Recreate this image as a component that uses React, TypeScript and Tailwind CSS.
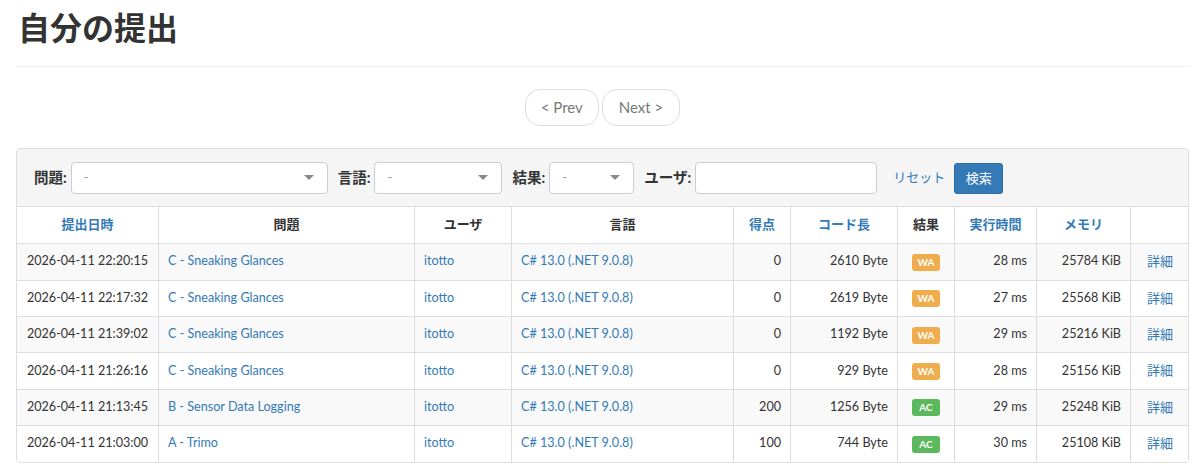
import React from "react";

type Row = {
  date: string;
  problem: string;
  score: string;
  size: string;
  result: "WA" | "AC";
  time: string;
  mem: string;
};

const rows: Row[] = [
  { date: "2026-04-11 22:20:15", problem: "C - Sneaking Glances", score: "0", size: "2610 Byte", result: "WA", time: "28 ms", mem: "25784 KiB" },
  { date: "2026-04-11 22:17:32", problem: "C - Sneaking Glances", score: "0", size: "2619 Byte", result: "WA", time: "27 ms", mem: "25568 KiB" },
  { date: "2026-04-11 21:39:02", problem: "C - Sneaking Glances", score: "0", size: "1192 Byte", result: "WA", time: "29 ms", mem: "25216 KiB" },
  { date: "2026-04-11 21:26:16", problem: "C - Sneaking Glances", score: "0", size: "929 Byte", result: "WA", time: "28 ms", mem: "25156 KiB" },
  { date: "2026-04-11 21:13:45", problem: "B - Sensor Data Logging", score: "200", size: "1256 Byte", result: "AC", time: "29 ms", mem: "25248 KiB" },
  { date: "2026-04-11 21:03:00", problem: "A - Trimo", score: "100", size: "744 Byte", result: "AC", time: "30 ms", mem: "25108 KiB" },
];

function Caret() {
  return (
    <svg width="10" height="6" viewBox="0 0 10 6" className="shrink-0">
      <path d="M0 0 L10 0 L5 5 Z" fill="#888" />
    </svg>
  );
}

function Select({ w }: { w: string }) {
  return (
    <div className={`${w} h-[32px] bg-white border border-[#ccc] rounded-[4px] flex items-center justify-between pl-[12px] pr-[13px]`}>
      <span className="text-[#999] text-[13px]">-</span>
      <Caret />
    </div>
  );
}

export default function App() {
  const font = { fontFamily: 'Lato, "Noto Sans CJK JP", sans-serif' };
  const th = "border border-[#ddd] font-bold text-center align-middle px-2 text-[13px]";
  const td = "border border-[#ddd] align-middle px-[9px] whitespace-nowrap text-[12.6px]";
  const label = "font-bold text-[14.5px]";
  return (
    <div className="w-[1200px] bg-white text-[#333] text-[13px] pl-4 pr-[11px]" style={font}>
      <h2 className="text-[32px] font-bold leading-[1.1] pt-[10px] pb-[21px] m-0 pl-[2px]">自分の提出</h2>
      <div className="border-t border-[#eee]" />
      <div className="flex justify-center gap-[3px] pt-[22px] pb-[22px]">
        <span className="h-[37px] px-[15px] flex items-center border border-[#ddd] rounded-[15px] text-[#777] text-[15px]">&lt; Prev</span>
        <span className="h-[37px] px-[16px] flex items-center border border-[#ddd] rounded-[15px] text-[#777] text-[15px]">Next &gt;</span>
      </div>
      <div className="border border-[#ddd] rounded-[4px] overflow-hidden">
        <div className="bg-[#f5f5f5] h-[57px] flex items-center pl-[17px]">
          <span className={`${label} mr-[4px]`}>問題:</span>
          <Select w="w-[257px]" />
          <span className={`${label} ml-[10px] mr-[4px]`}>言語:</span>
          <Select w="w-[128px]" />
          <span className={`${label} ml-[10px] mr-[4px]`}>結果:</span>
          <Select w="w-[85px]" />
          <span className={`${label} ml-[10px] mr-[4px]`}>ユーザ:</span>
          <div className="w-[182px] h-[32px] bg-white border border-[#ccc] rounded-[4px]" />
          <span className="text-[#337ab7] text-[13px] ml-[16px]">リセット</span>
          <span className="ml-[9px] mt-[2px] h-[31px] w-[49px] flex items-center justify-center bg-[#337ab7] border border-[#2e6da4] rounded-[3px] text-white text-[13px]">検索</span>
        </div>
        <table className="border-collapse table-fixed -mx-px -mb-px" style={{ width: "calc(100% + 2px)" }}>
          <colgroup>
            <col className="w-[142px]" />
            <col className="w-[256px]" />
            <col className="w-[97px]" />
            <col className="w-[222px]" />
            <col className="w-[57px]" />
            <col className="w-[107px]" />
            <col className="w-[57px]" />
            <col className="w-[82px]" />
            <col className="w-[94px]" />
            <col className="w-[59px]" />
          </colgroup>
          <thead>
            <tr className="h-[37px]">
              <th className={`${th} text-[#337ab7]`}>提出日時</th>
              <th className={th}>問題</th>
              <th className={th}>ユーザ</th>
              <th className={th}>言語</th>
              <th className={`${th} text-[#337ab7]`}>得点</th>
              <th className={`${th} text-[#337ab7]`}>コード長</th>
              <th className={th}>結果</th>
              <th className={`${th} text-[#337ab7]`}>実行時間</th>
              <th className={`${th} text-[#337ab7]`}>メモリ</th>
              <th className={th}></th>
            </tr>
          </thead>
          <tbody>
            {rows.map((r, i) => (
              <tr key={i} className={`h-[36.4px] ${i % 2 === 0 ? "bg-[#f9f9f9]" : "bg-white"}`}>
                <td className={`${td} text-center`}>{r.date}</td>
                <td className={`${td} text-[#337ab7]`}>{r.problem}</td>
                <td className={`${td} text-[#337ab7]`}>itotto</td>
                <td className={`${td} text-[#337ab7]`}>C# 13.0 (.NET 9.0.8)</td>
                <td className={`${td} text-right`}>{r.score}</td>
                <td className={`${td} text-right`}>{r.size}</td>
                <td className={`${td} text-center`}>
                  <span
                    className={`inline-flex items-center justify-center w-[28px] h-[17px] rounded-[3px] text-white text-[10px] font-bold align-middle ${
                      r.result === "WA" ? "bg-[#f0ad4e]" : "bg-[#5cb85c]"
                    }`}
                  >
                    {r.result}
                  </span>
                </td>
                <td className={`${td} text-right`}>{r.time}</td>
                <td className={`${td} text-right`}>{r.mem}</td>
                <td className={`${td} text-center text-[#337ab7] text-[13px]`}>詳細</td>
              </tr>
            ))}
          </tbody>
        </table>
      </div>
    </div>
  );
}
